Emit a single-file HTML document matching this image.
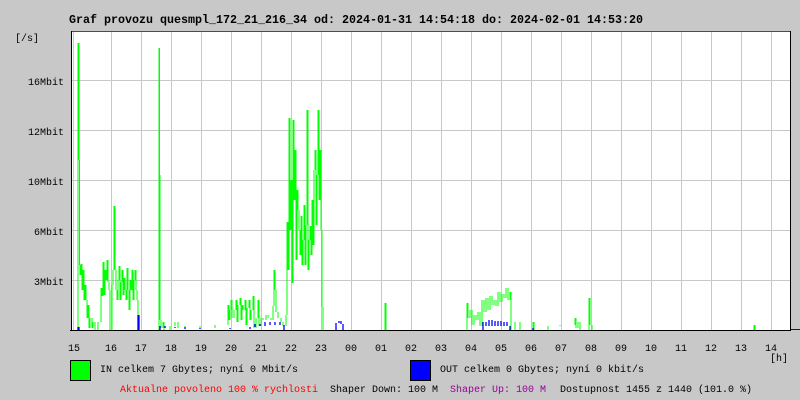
<!DOCTYPE html>
<html><head><meta charset="utf-8"><style>
body{margin:0;width:800px;height:400px;background:#c8c8c8;overflow:hidden;font-family:"Liberation Mono","DejaVu Sans Mono",monospace}
svg{position:absolute;left:0;top:0}
</style></head><body>
<svg width="800" height="400" xmlns="http://www.w3.org/2000/svg" font-family="Liberation Mono, DejaVu Sans Mono, monospace">
<rect x="71" y="31" width="720" height="299" fill="#fff"/>
<g stroke="#c8c8c8" stroke-width="1">
<path d="M73.5 31V330M111.5 31V330M141.5 31V330M171.5 31V330M201.5 31V330M231.5 31V330M261.5 31V330M291.5 31V330M321.5 31V330M351.5 31V330M381.5 31V330M411.5 31V330M441.5 31V330M471.5 31V330M501.5 31V330M531.5 31V330M561.5 31V330M591.5 31V330M621.5 31V330M651.5 31V330M681.5 31V330M711.5 31V330M741.5 31V330M771.5 31V330"/>
<path d="M66 80.5H791M66 130.5H791M66 180.5H791M66 230.5H791M66 280.5H791"/>
</g>
<g fill="none" stroke="#00ff00" stroke-width="1">
<path d="M78 330V43M79 43V160M79.5 160V265M80 265V275M81 275V264M82 264V290M83 290V270M84 270V300M85 300V285M86 285V300M87 300V318M88 318V305M89 305V328M90 328V318M92 318V328M93 328V322M95 322V330M98 330V322M101 322V288M102 288V296M103 296V262M104 262V295M105 295V270M106 270V280M107 280V260M108 260V282M109 282V290M110 290V330M112 330V285M113 285V270M114 270V206M115 206V270M116 270V290M117 290V300M118 300V280M119 280V266M120 266V300M121 300V282M122 282V270M123 270V295M124 295V278M125 278V290M126 290V300M127 300V268M128 268V290M129 290V310M130 310V280M131 280V290M132 290V270M133 270V300M134 300V280M135 280V270M136 270V290M137 290V300M138 300V330"/>
<path d="M159 330V48M159.5 48V175M160 175V320M161 320V328M163 328V322M164 322V330M170 330V326M175 326V322M178 322V328M185 328V326M200 326V328M215 328V325M228 325V305M229 305V320M230 320V310M231 310V300M232 300V318M234 318V310M236 310V300M237 300V322M238 322V305M240 305V298M241 298V320M242 320V305M243 305V310M245 310V300M246 300V325M247 325V308M249 308V300M250 300V320M251 320V310M253 310V296M254 296V328M256 328V318M258 318V300M259 300V326M261 326V318M263 318V320M266 320V315M268 315V318M271 318V320M273 320V306M274 306V270M275 270V290M276 290V312M278 312V318M281 318V322M283 322V326M286 326V315M287 315V222M288 222V270M289 270V118M290 118V230M291 230V180M292 180V283M293 283V120M294 120V200M295 200V150M296 150V260M297 260V190M298 190V210M299 210V230M300 230V255M301 255V216M302 216V265M303 265V240M304 240V205M305 205V265M306 265V225M307 225V110M308 110V270M309 270V240M310 240V226M311 226V255M312 255V200M313 200V245M314 245V170M315 170V150M316 150V225M317 225V175M318 175V110M319 110V200M320 200V150M321 150V230M322 230V307M323 307V330"/>
<path d="M385 330V303M386 303V330M467 330V303M468 303V318M470 318V310M472 310V325M474 325V315M476 315V320M478 320V312M480 312V326M482 326V300M484 300V312M486 312V298M488 298V310M490 310V296M492 296V305M494 305V300M496 300V306M498 306V292M500 292V302M502 302V294M504 294V298M506 298V288M508 288V300M510 300V292M511 292V330M515 330V322M520 322V330M533 330V322M534 322V330M548 330V326M560 326V325M575 325V318M576 318V328M578 328V322M580 322V330M589 330V298M590 298V325M592 325V330M754 330V325M755 325V330"/>
</g>
<g fill="none" stroke="#0000ff" stroke-width="1.3">
<path d="M78 330V327M79 327V330M138 330V315M139 315V330M160 330V326M165 326V328M175 328V327M185 327V329M200 329V328M230 328V329M250 329V327M255 327V324M260 324V326M265 326V322M270 322V325M275 325V322M280 322V325M284 325V330M336 330V323M339 323V321M341 321V324M343 324V330M483 330V322M486 322V326M489 326V320M492 320V326M495 326V321M498 321V326M501 326V321M504 326V322M507 322V326M510 326V330M533 330V328"/>
</g>
<path d="M71 31.5H791" stroke="#ff0000" stroke-width="1"/>
<path d="M71.5 31V331M70 330.5H791" stroke="#000" stroke-width="1"/>
<path d="M790.5 31V330" stroke="#000" stroke-width="1"/>
<path d="M791 329.5H800" stroke="#0000ff" stroke-width="1"/>
<text x="69" y="23" font-size="11.7" font-weight="bold" fill="#000" textLength="574">Graf provozu quesmpl_172_21_216_34 od: 2024-01-31 14:54:18 do: 2024-02-01 14:53:20</text>
<g font-size="10" fill="#000">
<text x="15" y="41">[/s]</text>
<text x="64" y="85" text-anchor="end">16Mbit</text>
<text x="64" y="135" text-anchor="end">12Mbit</text>
<text x="64" y="185" text-anchor="end">10Mbit</text>
<text x="64" y="235" text-anchor="end">6Mbit</text>
<text x="64" y="285" text-anchor="end">3Mbit</text>
<g text-anchor="middle">
<text x="74" y="351">15</text><text x="111" y="351">16</text><text x="141" y="351">17</text><text x="171" y="351">18</text><text x="201" y="351">19</text><text x="231" y="351">20</text><text x="261" y="351">21</text><text x="291" y="351">22</text><text x="321" y="351">23</text><text x="351" y="351">00</text><text x="381" y="351">01</text><text x="411" y="351">02</text><text x="441" y="351">03</text><text x="471" y="351">04</text><text x="501" y="351">05</text><text x="531" y="351">06</text><text x="561" y="351">07</text><text x="591" y="351">08</text><text x="621" y="351">09</text><text x="651" y="351">10</text><text x="681" y="351">11</text><text x="711" y="351">12</text><text x="741" y="351">13</text><text x="771" y="351">14</text>
</g>
<text x="770" y="361">[h]</text>
<text x="100" y="372">IN celkem 7 Gbytes; nyní 0 Mbit/s</text>
<text x="440" y="372">OUT celkem 0 Gbytes; nyní 0 kbit/s</text>
<text x="120" y="392" fill="#ff0000">Aktualne povoleno 100 % rychlosti</text>
<text x="330" y="392">Shaper Down: 100 M</text>
<text x="450" y="392" fill="#990099">Shaper Up: 100 M</text>
<text x="560" y="392">Dostupnost 1455 z 1440 (101.0 %)</text>
</g>
<rect x="70.5" y="360.5" width="20" height="20" fill="#00ff00" stroke="#000"/>
<rect x="410.5" y="360.5" width="20" height="20" fill="#0000ff" stroke="#000"/>
</svg>
</body></html>
